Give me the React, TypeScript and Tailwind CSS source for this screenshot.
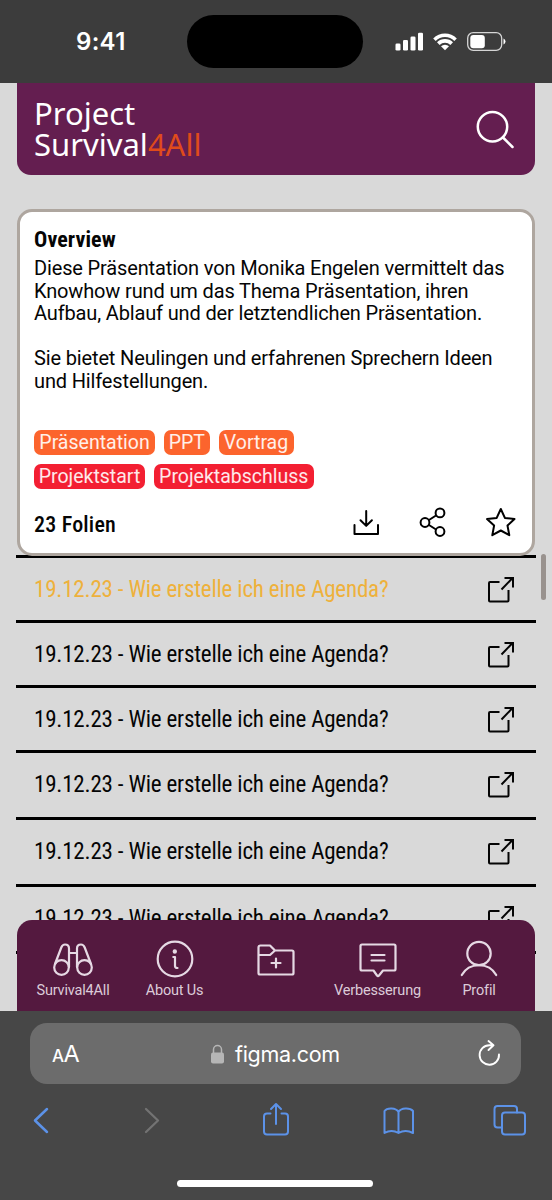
import type { ReactNode } from "react";

const entries = [
  { height: "h-[65px]", active: true },
  { height: "h-[65px]", active: false },
  { height: "h-[65px]", active: false },
  { height: "h-[67px] pb-[2px]", active: false },
  { height: "h-[67px] pb-px", active: false },
  { height: "h-[67px] pb-px", active: false },
];

function StatusBar() {
  return (
    <header className="flex h-[83px] shrink-0 items-center bg-[#3c3c3c] pl-[76px] text-white">
      <span className="w-[111px] pt-px font-['Inter',sans-serif] text-[24px] font-semibold leading-none tracking-[0.3px]">9:41</span>
      <div className="h-[53px] w-[176px] rounded-full bg-black" />
      <svg className="ml-8 h-[19px] w-28" viewBox="0 0 112 19" fill="none">
        <g fill="white">
          <rect x="0.5" y="11.5" width="5" height="7" rx="1.3" />
          <rect x="8" y="8" width="5" height="10.5" rx="1.3" />
          <rect x="15.5" y="4.500" width="5" height="14" rx="1.3" />
          <rect x="23" y="0.700" width="5" height="17.800" rx="1.3" />
          <path d="M38.2 6.400a16.600 16.600 0 0 1 23.600 0l-2.500 2.600a13 13 0 0 0-18.600 0z" />
          <path d="M42 10.300a11.300 11.300 0 0 1 16 0l-2.600 2.600a7.600 7.600 0 0 0-10.800 0z" />
          <path d="M46 14.300a5.700 5.700 0 0 1 8 0L50 18.300z" />
          <rect x="75.300" y="3" width="14.500" height="13.200" rx="3" />
          <path d="M108.500 6.500q2 1 2 3t-2 3z" />
        </g>
        <rect x="72.700" y="0.700" width="34" height="17.600" rx="5.500" stroke="#d5d5d5" strokeWidth="1.3" />
      </svg>
    </header>
  );
}

function ExternalIcon() {
  return (
    <svg className="h-7 w-7" viewBox="0 0 28 28" fill="none" stroke="currentColor" strokeWidth="2" strokeLinejoin="round">
      <path d="M12.500 6H3q-1 0-1 1v17.500q0 1 1 1h17.500q1 0 1-1V14" />
      <path d="M14.500 13.500 25.500 2M17.500 2h8.500v9.500" strokeLinejoin="miter" />
    </svg>
  );
}

function Tag({ color, children }: { color: string; children: ReactNode }) {
  return <span className={`flex h-[25px] items-center justify-center rounded-[7px] pt-px text-[19.5px] leading-none text-white/90 ${color}`}>{children}</span>;
}

function OverviewCard() {
  return (
    <section className="relative mx-[17px] mt-[34px] flex h-[347px] shrink-0 flex-col rounded-[15px] border-[3px] border-[#aea69f] bg-white px-3.5 pt-[17px]">
      <h2 className="h-[28px] text-[22px] font-bold leading-[22px] tracking-[0.1px] [font-stretch:75%]">Overview</h2>
      <p className="whitespace-nowrap text-[20px] leading-[22.5px] tracking-[-0.145px]">
        Diese Präsentation von Monika Engelen vermittelt das<br />
        Knowhow rund um das Thema Präsentation, ihren<br />
        Aufbau, Ablauf und der letztendlichen Präsentation.<br />
        <br />
        Sie bietet Neulingen und erfahrenen Sprechern Ideen<br />
        und Hilfestellungen.
      </p>
      <div className="mt-[38px] flex gap-[8.500px]">
        <Tag color="w-[121px] bg-[#fc642d]">Präsentation</Tag>
        <Tag color="w-[46.5px] bg-[#fc642d]">PPT</Tag>
        <Tag color="w-[75px] bg-[#fc642d]">Vortrag</Tag>
      </div>
      <div className="mt-[8.5px] flex gap-[8.500px]">
        <Tag color="w-[111px] bg-[#f31f32]">Projektstart</Tag>
        <Tag color="w-[160.5px] bg-[#f31f32]">Projektabschluss</Tag>
      </div>
      <div className="mt-[17px] flex h-8 items-center">
        <span className="w-[318px] pt-[7px] text-[22px] font-medium leading-none tracking-[0.2px] [font-stretch:75%]">23 Folien</span>
        <svg className="h-[30px] w-[30px]" viewBox="0 0 30 30" fill="none" stroke="black" strokeWidth="2" strokeLinecap="round" strokeLinejoin="round">
          <path d="M2.500 18v9h23.500v-9M14.200 4v14.500M8.500 13.200l5.700 5.700 5.700-5.700" />
        </svg>
        <svg className="ml-9 h-[30px] w-[30px]" viewBox="0 0 30 30" fill="none" stroke="black" strokeWidth="2">
          <circle cx="7" cy="15.500" r="4.400" /><circle cx="22" cy="5.900" r="4.400" /><circle cx="22" cy="24.500" r="4.400" />
          <path d="m11 13 7-4.500M11 18l7 4.500" />
        </svg>
        <svg className="ml-9 h-8 w-8" viewBox="0 0 32 32" fill="none" stroke="black" strokeWidth="2" strokeLinejoin="round">
          <path d="M16.800 3 20.900 11.900 30.500 13.100 23.500 19.600 25.300 29.200 16.800 24.500 8.300 29.200 10.100 19.600 3 13.100 12.700 11.900Z" />
        </svg>
      </div>
    </section>
  );
}

function NavItem({ label, width, children }: { label?: string; width: string; children: ReactNode }) {
  return (
    <div className={`flex flex-col items-center ${width}`}>
      <svg className="h-10 w-[42px]" viewBox="0 0 42 40" fill="none" stroke="#e6d9e4" strokeWidth="2.200" strokeLinecap="round" strokeLinejoin="round">{children}</svg>
      <span className="mt-0.5 whitespace-nowrap text-[14.5px] leading-[17px] tracking-[-0.18px]">{label}</span>
    </div>
  );
}

function BottomNav() {
  return (
    <nav className="absolute bottom-0 left-[17px] right-[17px] flex h-[91px] rounded-t-[15px] bg-[#54193f] pl-[5px] pt-5 text-[#dccbd9]">
      <NavItem label="Survival4All" width="w-[102px]">
        <circle cx="9.500" cy="27.500" r="7.300" /><circle cx="32.500" cy="27.500" r="7.300" />
        <path d="m3 24 6.300-16.500Q10.500 4.500 13 4.500q4 0 4 4V27M39 24 32.700 7.500Q31.500 4.500 29 4.500q-4 0-4 4V27M17 13h8" />
      </NavItem>
      <NavItem label="About Us" width="w-[101px]">
        <circle cx="21" cy="19" r="17.300" /><circle cx="20.800" cy="11.500" r="1.100" fill="#e6d9e4" />
        <path d="M19.300 17h1.700v9q0 2 2.500 2" />
      </NavItem>
      <NavItem width="w-[102px]">
        <path d="M3.500 33V7.500q0-2 2-2h9.500l5 5h17q1.500 0 1.500 1.500v21q0 1.500-1.500 1.500h-32q-1.500 0-1.500-1.500ZM4 15h11l5-4.500M21 18.500v9M16.500 23h9" />
      </NavItem>
      <NavItem label="Verbesserung" width="w-[101px]">
        <path d="M5 4.500h32q1.500 0 1.500 1.500v23q0 1.500-1.500 1.500H26L22 35.500q-1 1.500-2 0L16.500 30.500H5q-1.500 0-1.500-1.500V6Q3.500 4.500 5 4.500ZM14.500 15h13M14.500 20.500h13" />
      </NavItem>
      <NavItem label="Profil" width="w-[102px]">
        <circle cx="21" cy="13.500" r="11.700" /><path d="M3.800 35C11 22 31 22 38.200 35" />
      </NavItem>
    </nav>
  );
}

function BrowserBar() {
  return (
    <footer className="flex h-[189px] shrink-0 flex-col bg-[#474747] pt-3">
      <div className="ml-[30px] mr-[31px] flex h-[61px] shrink-0 items-center rounded-[17px] bg-[#6c6c6c] font-['Inter',sans-serif] text-white">
        <div className="flex w-[180px] items-baseline pl-[22px] leading-none">
          <span className="text-[17px] font-medium tracking-[-0.5px]">A</span><span className="text-[23.5px]">A</span>
        </div>
        <svg className="h-5 w-[15px]" viewBox="0 0 15 20" fill="#b6b6b6">
          <rect x="1" y="8.500" width="13" height="11" rx="2" />
          <path d="M3.500 9V5.500a4 4 0 0 1 8 0V9" fill="none" stroke="#b6b6b6" strokeWidth="1.500" />
        </svg>
        <span className="ml-[10px] w-[240px] pt-0.5 text-[21.5px] leading-none tracking-[-0.3px]">figma.com</span>
        <svg className="h-[30px] w-7" viewBox="0 0 28 30" fill="none" stroke="white" strokeWidth="1.900" strokeLinecap="round" strokeLinejoin="round">
          <path d="M24 15.500A9.700 9.700 0 1 1 14.300 6.300H18M13.500 2 18.500 6.300 13.500 11" />
        </svg>
      </div>
      <svg className="mt-3 h-12 w-[552px] shrink-0" viewBox="0 0 552 48" fill="none" stroke="#5c92e8" strokeWidth="2" strokeLinecap="round" strokeLinejoin="round">
        <path d="M47 13 35 24.500 47 36" strokeWidth="2.500" />
        <path d="m146 13 12 11.500L146 36" stroke="#737373" strokeWidth="2.300" />
        <path d="M270.500 17.500H267q-3 0-3 3v15q0 3 3 3h18q3 0 3-3v-15q0-3-3-3h-3.500M276 28V8.500M271 13l5-5 5 5" />
        <path d="M398.500 37V16C396 11.500 387 11.500 384.500 15v22q7-4 14 0 7-4 14.500 0V15C410 11.500 401 11.500 398.500 16" />
        <rect x="502" y="16.500" width="23" height="22" rx="3" />
        <path d="M502 31.500h-4.500q-3 0-3-3V13q0-3 3-3H514q3 0 3 3v3.500" />
      </svg>
      <div className="mx-auto mt-9 h-[7px] w-[196px] -translate-x-px rounded-full bg-white" />
    </footer>
  );
}

export default function App() {
  return (
    <div className="flex h-[1200px] w-[552px] flex-col overflow-hidden bg-[#d9d9d9] font-['Roboto',sans-serif] text-[#050505]">
      <StatusBar />
      <main className="relative flex h-[928px] shrink-0 flex-col overflow-hidden">
        <div className="mx-[17px] flex h-[92px] shrink-0 items-start justify-between rounded-b-[14px] bg-[#641e50] pl-[17px] pr-5 pt-[15px]">
          <h1 className="font-['Noto_Sans',sans-serif] text-[31px] font-normal leading-[31px] text-white">
            Project<br />Survival<span className="text-[#df4b1b]">4All</span>
          </h1>
          <svg className="mt-[11px] h-10 w-10" viewBox="0 0 40 40" fill="none" stroke="white" strokeWidth="2.500" strokeLinecap="round">
            <circle cx="17.500" cy="17.800" r="14.700" /><path d="m28 28.500 9.500 9.500" />
          </svg>
        </div>
        <OverviewCard />
        <ul className="mx-4 -mt-px flex flex-col border-t-[3px] border-black">
          {entries.map((entry, i) => (
            <li key={i} className={`flex shrink-0 items-center justify-between border-b-[3px] border-black pl-[18px] pr-[21px] ${entry.height} ${entry.active ? "text-[#eeb13c]" : ""}`}>
              <span className="whitespace-nowrap text-[23px] leading-none tracking-[-0.19px] [font-stretch:75%]">19.12.23 - Wie erstelle ich eine Agenda?</span>
              <span className="pt-px text-[#050505]"><ExternalIcon /></span>
            </li>
          ))}
        </ul>
        <div className="absolute right-1.5 top-[471px] h-[46px] w-[5px] rounded-full bg-[#99928e]" />
        <BottomNav />
      </main>
      <BrowserBar />
    </div>
  );
}
